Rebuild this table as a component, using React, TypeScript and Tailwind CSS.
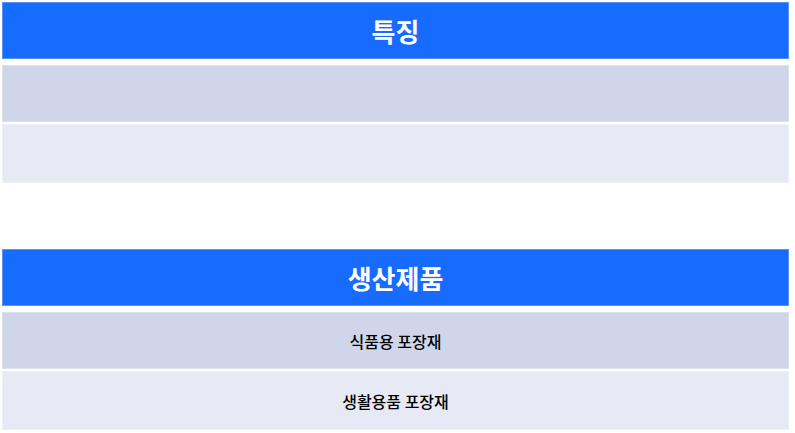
const sections = [
  { title: '특징', rows: ['', ''] },
  { title: '생산제품', rows: ['식품용 포장재', '생활용품 포장재'] },
];

function Section({ title, rows }: { title: string; rows: string[] }) {
  return (
    <div className="flex flex-col">
      <div className="h-[57px] flex items-center justify-center bg-[#186bff] border border-[#5b93f5] text-white text-[26px] font-bold">
        {title}
      </div>
      <div className="mt-[6px] h-[57px] flex items-center justify-center bg-[#d0d6ea] border border-[#dde1ee] text-[16px] font-medium text-black">
        {rows[0]}
      </div>
      <div className="mt-[2px] h-[59px] flex items-center justify-center bg-[#e7eaf4] border border-[#eef0f7] text-[16px] font-medium text-black">
        {rows[1]}
      </div>
    </div>
  );
}

export default function App() {
  return (
    <div
      className="w-[795px] h-[433px] bg-white pl-[2px] pr-[6px] pt-[2px] flex flex-col gap-[66px]"
      style={{ fontFamily: '"Noto Sans CJK KR", "Noto Sans", sans-serif' }}
    >
      {sections.map((s) => (
        <Section key={s.title} title={s.title} rows={s.rows} />
      ))}
    </div>
  );
}
